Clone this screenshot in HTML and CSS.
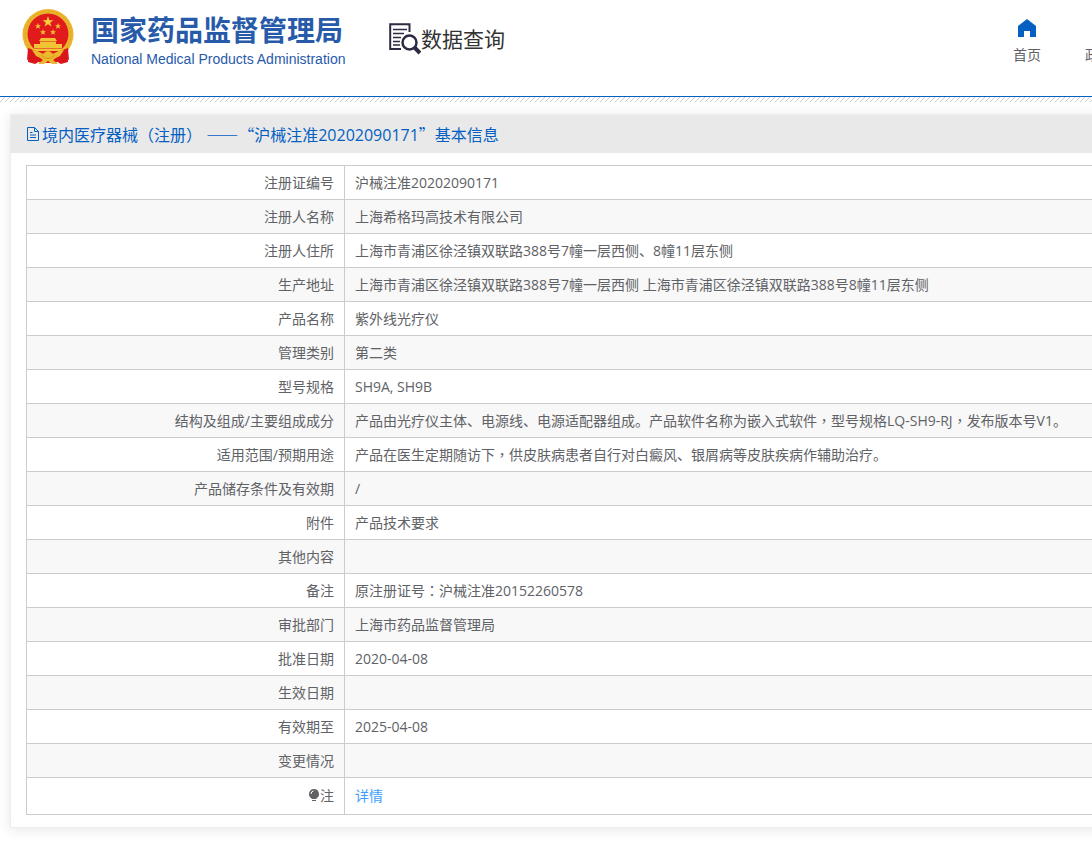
FILE: index.html
```
<!DOCTYPE html>
<html lang="zh-CN">
<head>
    <meta charset="UTF-8">
    <meta name="viewport" content="width=device-width, initial-scale=1.0">
    <title>国家药品监督管理局 数据查询</title>
    <link rel="stylesheet" href="styles.css">
</head>
<body>

    <header class="header">
        <a class="brand" href="#">
            <svg class="emblem" viewBox="0 0 52 56" aria-hidden="true">
                <path d="M7 37 L6 53 L13 55 L18 52 L34 52 L39 55 L46 53 L45 37 Z" fill="#d9161b"/>
                <circle cx="26" cy="25.500" r="25.500" fill="#eab52c"/>
                <circle cx="26" cy="25.500" r="23" fill="none" stroke="#dca325" stroke-width="1" stroke-dasharray="2 2"/>
                <circle cx="26" cy="25" r="20.500" fill="#e11b1c"/>
                <path d="M26 7 L27.400 11.200 L31.500 11.200 L28.200 13.700 L29.400 17.600 L26 15.200 L22.600 17.600 L23.800 13.700 L20.500 11.200 L24.600 11.200 Z" fill="#f7cf3b"/>
                <g fill="#f2c334">
                    <path id="star" d="M16 14 L16.800 16.200 L19 16.200 L17.300 17.600 L17.900 19.700 L16 18.500 L14.100 19.700 L14.700 17.600 L13 16.200 L15.200 16.200 Z"/>
                    <use href="#star" x="20"/>
                    <use href="#star" x="5" y="6"/>
                    <use href="#star" x="15" y="6"/>
                    <path d="M19 29 H33 L35 32 H17 Z M18 32.500 H34 V35 H18 Z M12 35 H40 V39 H12 Z M9 39.500 H43 L41 42 H11 Z"/>
                </g>
                <path d="M6 39 Q16 42 21 48 H31 Q36 42 46 39 L47 51 L39 48 L34 54 H18 L13 48 L5 51 Z" fill="#d9161b"/>
                <path d="M10 41 Q17 42 21 45 Q26 39 31 45 Q35 42 42 41 L38 47 Q33 49 31 51 L36 55 H30 L26 52 L22 55 H16 L21 51 Q19 49 14 47 Z" fill="#ecb92d"/>
                <path d="M19 46 Q26 53 33 46" fill="none" stroke="#d98f1c"/>
            </svg>
            <span class="brand-text">
                <strong class="brand-cn">国家药品监督管理局</strong>
                <span class="brand-en">National Medical Products Administration</span>
            </span>
        </a>

        <a class="search-title" href="#">
            <svg class="search-icon" viewBox="0 0 32 32" fill="none" stroke="#2d2b42" aria-hidden="true">
                <path d="M20.500 9 V1.200 H1.200 V26 H12" stroke-width="2"/>
                <path d="M4 6.500 H18 M4 10.500 H15 M4 14.500 H12 M4 18.500 H11 M4 22 H11" stroke-width="1.500"/>
                <circle cx="20.500" cy="19.500" r="7" stroke-width="2.500"/>
                <path d="M25.500 24.500 L31 30" stroke-width="4"/>
            </svg>
            <span>数据查询</span>
        </a>

        <nav class="nav">
            <a href="#">
                <svg class="nav-icon" viewBox="0 0 18 18" aria-hidden="true">
                    <path d="M9 0 L18 7 V18 H12 V12 H6 V18 H0 V7 Z" fill="#0560c2"/>
                </svg>
                <span>首页</span>
            </a>
            <a href="#">
                <span class="nav-icon"></span>
                <span>政务服务</span>
            </a>
        </nav>
    </header>
    <div class="stripes"></div>

    <main class="card">
        <h1 class="card-title">
            <svg class="file-icon" viewBox="0 0 14 14" fill="none" stroke="#0560c2" aria-hidden="true">
                <path d="M1.500 .5 H8.500 L12.500 4.500 V13.500 H1.500 Z M8.500 .5 V4.500 H12.500 M4 5.500 H6.500 M4 8 H10 M4 10.500 H10"/>
            </svg>
            <span>境内医疗器械（注册） <span class="quote">——“</span>沪械注准20202090171<span class="quote">”</span>基本信息</span>
        </h1>

        <div class="card-body">
            <table class="info">
                <tbody>
                    <tr><th scope="row">注册证编号</th><td>沪械注准20202090171</td></tr>
                    <tr><th scope="row">注册人名称</th><td>上海希格玛高技术有限公司</td></tr>
                    <tr><th scope="row">注册人住所</th><td>上海市青浦区徐泾镇双联路388号7幢一层西侧、8幢11层东侧</td></tr>
                    <tr><th scope="row">生产地址</th><td>上海市青浦区徐泾镇双联路388号7幢一层西侧 上海市青浦区徐泾镇双联路388号8幢11层东侧</td></tr>
                    <tr><th scope="row">产品名称</th><td>紫外线光疗仪</td></tr>
                    <tr><th scope="row">管理类别</th><td>第二类</td></tr>
                    <tr><th scope="row">型号规格</th><td>SH9A, SH9B</td></tr>
                    <tr><th scope="row">结构及组成/主要组成成分</th><td>产品由光疗仪主体、电源线、电源适配器组成。产品软件名称为嵌入式软件<span class="mark" lang="zh-TW">，</span>型号规格LQ-SH9-RJ<span class="mark" lang="zh-TW">，</span>发布版本号V1。</td></tr>
                    <tr><th scope="row">适用范围/预期用途</th><td>产品在医生定期随访下<span class="mark" lang="zh-TW">，</span>供皮肤病患者自行对白癜风、银屑病等皮肤疾病作辅助治疗。</td></tr>
                    <tr><th scope="row">产品储存条件及有效期</th><td>/</td></tr>
                    <tr><th scope="row">附件</th><td>产品技术要求</td></tr>
                    <tr><th scope="row">其他内容</th><td></td></tr>
                    <tr><th scope="row">备注</th><td>原注册证号<span class="mark" lang="zh-TW">：</span>沪械注准20152260578</td></tr>
                    <tr><th scope="row">审批部门</th><td>上海市药品监督管理局</td></tr>
                    <tr><th scope="row">批准日期</th><td>2020-04-08</td></tr>
                    <tr><th scope="row">生效日期</th><td></td></tr>
                    <tr><th scope="row">有效期至</th><td>2025-04-08</td></tr>
                    <tr><th scope="row">变更情况</th><td></td></tr>
                    <tr class="note">
                        <th scope="row">
                            <svg class="bulb" viewBox="0 0 12 14" aria-hidden="true">
                                <path d="M6 1 a5 5 0 0 1 3 9 L8 11 H4 L3 10 A5 5 0 0 1 6 1 Z M4 12 H8 V13 H4 Z" fill="#606266"/>
                                <path d="M3 6 Q3 3.500 5.500 3" fill="none" stroke="#fff"/>
                            </svg>注
                        </th>
                        <td><a href="#">详情</a></td>
                    </tr>
                </tbody>
            </table>
        </div>
    </main>

</body>
</html>
```
FILE: styles.css
```
html {
    overflow-x: hidden;
}

body {
    min-width: 1322px;
    margin: 0;
    background: #fff;
    color: #606266;
    font-family: "Open Sans", "Noto Sans CJK SC", sans-serif;
    font-size: 14px;
    line-height: 20px;
}

a {
    color: inherit;
    text-decoration: none;
}

svg {
    flex: none;
}

.header {
    display: flex;
    align-items: flex-start;
    height: 97px;
    box-sizing: border-box;
    padding: 9px 0 0 22px;
    border-bottom: 1px solid #0560c2;
    white-space: nowrap;
}

.brand {
    display: flex;
    gap: 17px;
    width: 367px;
    color: #285aaa;
}

.emblem {
    width: 52px;
    height: 56px;
}

.brand-text {
    display: flex;
    flex-direction: column;
}

.brand-cn {
    font-size: 28px;
    line-height: 42px;
}

.brand-en {
    font-family: "Liberation Sans", sans-serif;
    font-size: 14px;
    line-height: 16px;
}

.search-title {
    display: flex;
    align-items: center;
    width: 614px;
    height: 60px;
    color: #333;
    font-size: 21px;
}

.search-icon {
    width: 32px;
    height: 32px;
}

.nav {
    display: flex;
    gap: 34px;
    padding-top: 10px;
}

.nav a {
    display: flex;
    flex-direction: column;
    align-items: center;
    gap: 8px;
    min-width: 48px;
}

.nav-icon {
    width: 18px;
    height: 18px;
}

.stripes {
    height: 5px;
    background: linear-gradient(135deg, transparent 42%, #ccc 42%, #ccc 58%, transparent 58%) 0 0 / 5px 5px;
}

.card {
    margin: 12px 10px 18px;
    border: 1px solid #ebeef5;
    box-shadow: 0 2px 12px rgba(0, 0, 0, .1);
}

.card-title {
    display: flex;
    align-items: center;
    height: 38px;
    margin: 0;
    padding-left: 15px;
    gap: 2px;
    background: #e9e9e9;
    color: #0560c2;
    font-size: 16px;
    font-weight: normal;
}

.file-icon {
    width: 14px;
    height: 14px;
}

/* full-width dash and quotes */
.quote {
    font-family: "Noto Sans CJK SC", sans-serif;
}

.card-body {
    padding: 12px 15px;
}

.info {
    width: 100%;
    border-collapse: collapse;
    table-layout: fixed;
}

.info th,
.info td {
    height: 34px;
    box-sizing: border-box;
    padding: 0 10px;
    border: 1px solid #ccc;
    font-weight: normal;
}

.info th {
    width: 318px;
    text-align: right;
}

.info td {
    text-align: left;
}

.info tr:nth-child(even) {
    background: #f8f8f8;
}

.info .note th,
.info .note td {
    height: 37px;
}

.info .note a {
    color: #409eff;
}

.bulb {
    width: 12px;
    height: 14px;
    vertical-align: -1px;
}

/* centred comma and colon */
.mark {
    font-family: "Noto Sans CJK TC", sans-serif;
    line-height: 1;
}
```
